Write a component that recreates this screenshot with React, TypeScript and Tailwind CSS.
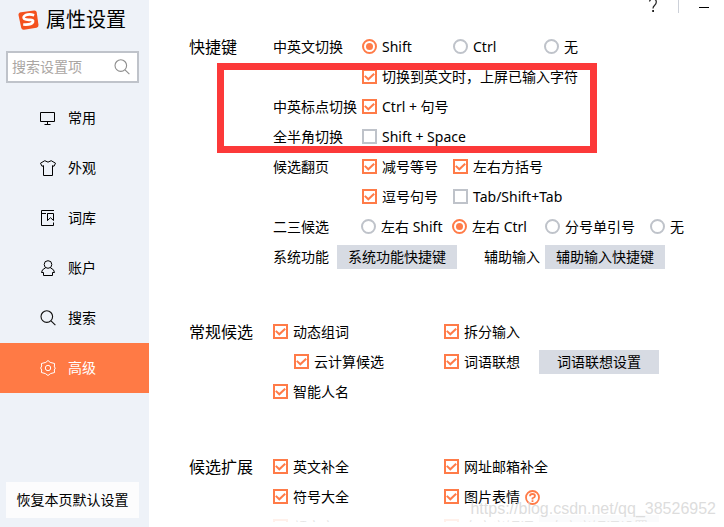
import type { ReactNode } from "react";

type ToggleProps = { children: ReactNode; checked?: boolean; className?: string };

function Check({ children, checked = false, className = "" }: ToggleProps) {
  return (
    <label className={`flex shrink-0 items-center gap-[5px] whitespace-nowrap ${className}`}>
      <span className="grid h-4 w-[15px] shrink-0 items-start">
        <input
          type="checkbox"
          defaultChecked={checked}
          className="peer col-start-1 row-start-1 size-[15px] appearance-none border-2 border-[#bfc3ca] bg-white checked:border-[#ff7b48]"
        />
        <svg
          viewBox="0 0 15 15"
          className="pointer-events-none invisible col-start-1 row-start-1 size-[15px] peer-checked:visible"
          fill="none"
          stroke="#ff7b48"
          strokeWidth="2"
        >
          <path d="M2.8 6.9 6.3 10.3 12.2 4.7" />
        </svg>
      </span>
      {children}
    </label>
  );
}

function Radio({ children, checked = false, className = "", name }: ToggleProps & { name: string }) {
  return (
    <label className={`flex shrink-0 items-center gap-[5px] whitespace-nowrap ${className}`}>
      <span className="grid h-4 w-[15px] shrink-0 grid-rows-[15px] place-items-center">
        <input
          type="radio"
          name={name}
          defaultChecked={checked}
          className="peer col-start-1 row-start-1 size-[15px] appearance-none rounded-full border-2 border-[#bfc3ca] bg-white checked:border-[#ff7b48]"
        />
        <span className="pointer-events-none invisible col-start-1 row-start-1 size-[7px] rounded-full bg-[#ff7b48] peer-checked:visible" />
      </span>
      {children}
    </label>
  );
}

function GrayButton({ children }: { children: ReactNode }) {
  return (
    <button type="button" className="h-6 w-[120px] shrink-0 whitespace-nowrap bg-[#d7dbe3] text-center">
      {children}
    </button>
  );
}

function Row({ label, labelWidth = "w-[89px]", children }: { label?: string; labelWidth?: string; children: ReactNode }) {
  return (
    <div className="flex h-[30px] items-center">
      <span className={`shrink-0 whitespace-nowrap ${labelWidth}`}>{label}</span>
      {children}
    </div>
  );
}

function Section({ title, children }: { title: string; children: ReactNode }) {
  return (
    <section className="flex">
      <h2 className="h-[30px] w-[84px] shrink-0 text-base leading-[30px]">{title}</h2>
      <div className="flex-1">{children}</div>
    </section>
  );
}

function SearchGlyph({ color }: { color: string }) {
  return (
    <svg viewBox="0 0 16 16" className="size-4 shrink-0" fill="none" stroke={color} strokeWidth="1.1">
      <circle cx="6.8" cy="6.6" r="5.8" />
      <path d="M11 10.8 15.4 15.2" />
    </svg>
  );
}

function NavIcon({ children }: { children: ReactNode }) {
  return (
    <svg viewBox="0 0 16 16" className="size-4 shrink-0" fill="none" stroke="currentColor" strokeWidth="1">
      {children}
    </svg>
  );
}

const navItems: { name: string; icon: ReactNode }[] = [
  {
    name: "常用",
    icon: (
      <NavIcon>
        <path d="M.5 2.5h14v9H.5zM7.5 11.5v3M4.5 14.5h6" />
      </NavIcon>
    ),
  },
  {
    name: "外观",
    icon: (
      <NavIcon>
        <path d="M4.8.7Q8 3.6 11.2.7L15.5 3.2 14 6.3 12.5 5.6V15.5H3.5V5.6L2 6.3.5 3.2Z" />
      </NavIcon>
    ),
  },
  {
    name: "词库",
    icon: (
      <NavIcon>
        <path d="M14 .5H1.5V15.5H13.5V12.5M1.5 3.5H6M7.5 10.5V3.5H13.5V10.5L10.5 7.7 7.5 10.5M7.5 3.5V10.5" />
      </NavIcon>
    ),
  },
  {
    name: "账户",
    icon: (
      <NavIcon>
        <circle cx="8" cy="4.5" r="3.8" />
        <path d="M5.6 7.8Q1.5 9.5 1.5 12.5H3.5V15.5H12.5V12.5H14.5Q14.5 9.5 10.4 7.8" />
      </NavIcon>
    ),
  },
  { name: "搜索", icon: <SearchGlyph color="#111111" /> },
  {
    name: "高级",
    icon: (
      <NavIcon>
        <path d="M8 .5 10.2 2.4 14.6 3.5 14.3 7 15.3 8 14.3 10 14.6 12.5 10.6 13.6 8 15.5 5.4 13.6 1.4 12.5 1.7 10 .7 8 1.7 6 1.4 3.5 5.8 2.4Z" />
        <circle cx="8" cy="8" r="2.7" />
      </NavIcon>
    ),
  },
];

function Sidebar() {
  return (
    <aside className="flex w-[149px] shrink-0 flex-col bg-[#eef2f8]">
      <header className="flex h-[51px] items-start gap-[7px] pt-[5px] pl-[18px]">
        <svg viewBox="0 0 21 20" className="mt-[5px] h-5 w-[21px] shrink-0">
          <path d="M3 2.2 16.2.5Q18.3.3 18.7 2.3L20.5 15Q20.7 17.2 18.6 17.7L6 19.7Q3.7 20 3.2 17.8L.5 5Q.2 2.7 3 2.2Z" fill="#f4511e" />
          <path
            d="M16.2 5.2Q11 3.6 7.3 5.3 4.4 7 6.3 8.9 8 10 12 9.8 15.8 9.9 15 12 13.2 15.2 5.2 14.5"
            fill="none"
            stroke="#ffffff"
            strokeWidth="2.6"
          />
        </svg>
        <h1 className="text-xl leading-[30px] whitespace-nowrap">属性设置</h1>
      </header>
      <div className="mr-[10px] ml-[6px] flex h-8 items-center border-2 border-[#bfc3ca] bg-white pr-[7px] pl-1">
        <input
          type="text"
          aria-label="搜索设置项"
          placeholder="搜索设置项"
          className="min-w-0 flex-1 bg-transparent outline-none placeholder:text-[#aaa6a3]"
        />
        <SearchGlyph color="#8e8e8e" />
      </div>
      <nav className="mt-[10px] flex flex-col">
        {navItems.map((item) => (
          <a
            key={item.name}
            href="#"
            aria-current={item.name === "高级" ? "page" : undefined}
            className="flex h-[50px] items-center gap-3 pl-10 aria-[current=page]:bg-[#ff7a45] aria-[current=page]:text-white"
          >
            {item.icon}
            {item.name}
          </a>
        ))}
      </nav>
      <button type="button" className="mt-auto mr-[10px] mb-[9px] ml-[6px] h-9 bg-[#fcfcfd] whitespace-nowrap">
        恢复本页默认设置
      </button>
    </aside>
  );
}

export default function App() {
  return (
    <div className="flex h-screen overflow-hidden bg-white font-['Noto_Sans','Noto_Sans_CJK_SC',sans-serif] text-sm leading-5 text-black">
      <Sidebar />
      <main className="relative flex min-w-0 flex-1 flex-col pb-[5px]">
        <div className="flex h-8 shrink-0 items-start justify-end pr-[15px]">
          <button type="button" aria-label="帮助" className="mr-5 h-[13px] w-[10px]">
            <svg viewBox="0 0 10 13" className="h-[13px] w-[10px]" fill="none" stroke="#222222" strokeWidth="1.2">
              <path d="M1.5 1.5Q2-1 5-1 8.3-1 8.3 2 8.3 4 6.5 5.5 5 6.8 5 8.5" />
              <path d="M4.2 11h1.8" strokeWidth="2" />
            </svg>
          </button>
          <span className="mr-5 h-[13px] w-px bg-[#cdd1d9]" />
          <button type="button" aria-label="最小化" className="h-2 w-[10px] border-b border-black" />
        </div>
        <div className="flex min-h-0 flex-1 flex-col gap-[45px] overflow-hidden pl-10">
          <Section title="快捷键">
            <Row label="中英文切换">
              <Radio name="language" checked className="w-[91px]">Shift</Radio>
              <Radio name="language" className="w-[91px]">Ctrl</Radio>
              <Radio name="language">无</Radio>
            </Row>
            <Row>
              <Check checked>切换到英文时，上屏已输入字符</Check>
            </Row>
            <Row label="中英标点切换">
              <Check checked>Ctrl + 句号</Check>
            </Row>
            <Row label="全半角切换">
              <Check>Shift + Space</Check>
            </Row>
            <Row label="候选翻页">
              <Check checked className="w-[91px]">减号等号</Check>
              <Check checked>左右方括号</Check>
            </Row>
            <Row>
              <Check checked className="w-[91px]">逗号句号</Check>
              <Check>Tab/Shift+Tab</Check>
            </Row>
            <Row label="二三候选" labelWidth="w-[88px]">
              <Radio name="candidate" className="w-[91px]">左右 Shift</Radio>
              <Radio name="candidate" checked className="w-[93px]">左右 Ctrl</Radio>
              <Radio name="candidate" className="w-[105px]">分号单引号</Radio>
              <Radio name="candidate">无</Radio>
            </Row>
            <Row label="系统功能" labelWidth="w-16">
              <GrayButton>系统功能快捷键</GrayButton>
              <span className="ml-[27px] w-[61px] shrink-0">辅助输入</span>
              <GrayButton>辅助输入快捷键</GrayButton>
            </Row>
          </Section>
          <Section title="常规候选">
            <div className="flex h-[30px] items-center">
              <Check checked className="w-[171px]">动态组词</Check>
              <Check checked>拆分输入</Check>
            </div>
            <div className="flex h-[30px] items-center">
              <Check checked className="w-[171px] pl-[21px]">云计算候选</Check>
              <Check checked className="w-[95px]">词语联想</Check>
              <GrayButton>词语联想设置</GrayButton>
            </div>
            <div className="flex h-[30px] items-center">
              <Check checked>智能人名</Check>
            </div>
          </Section>
          <Section title="候选扩展">
            <div className="flex h-[30px] items-center">
              <Check checked className="w-[171px]">英文补全</Check>
              <Check checked>网址邮箱补全</Check>
            </div>
            <div className="flex h-[30px] items-center">
              <Check checked className="w-[171px]">符号大全</Check>
              <Check checked>图片表情</Check>
              <button type="button" aria-label="图片表情说明" className="ml-[5px] h-4">
                <svg viewBox="0 0 15 15" className="size-[15px]" fill="none" stroke="#ff7b48" strokeWidth="1.8">
                  <circle cx="7.5" cy="7.5" r="6.5" />
                  <path d="M5 6.3Q5 4 7.5 4 10 4 10 6 10 7.2 7.5 8.3V9.4M7.5 10.3V12" />
                </svg>
              </button>
            </div>
            <div className="flex h-[30px] items-center opacity-10">
              <Check checked className="w-[171px]">颜文字</Check>
              <Check checked className="w-[95px]">自定义短语</Check>
              <GrayButton>自定义短语设置</GrayButton>
            </div>
          </Section>
        </div>
        <div className="pointer-events-none absolute top-[63px] left-[68px] h-[90px] w-[380px] border-7 border-[#fc3939]" />
        <span className="pointer-events-none absolute right-2 bottom-2 font-['Liberation_Sans',sans-serif] text-base leading-5 text-[#d4d4d4]/80">
          https://blog.csdn.net/qq_38526952
        </span>
      </main>
    </div>
  );
}
